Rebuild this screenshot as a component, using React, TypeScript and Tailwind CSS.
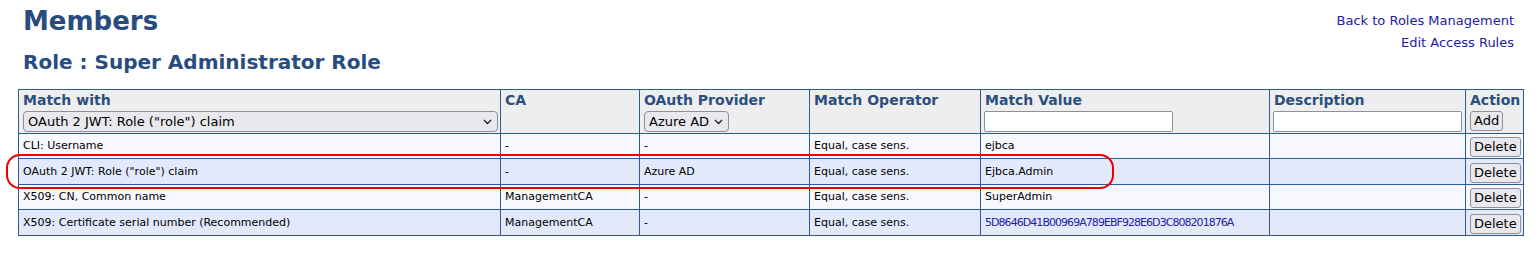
import React from "react";

const Chevron = () => (
  <svg width="9" height="6" viewBox="0 0 9 6" className="pointer-events-none absolute right-[6px] top-1/2 -translate-y-1/2">
    <polyline points="1,1 4.5,4.5 8,1" fill="none" stroke="#222" strokeWidth="1.4" />
  </svg>
);

function Sel({ value, className }: { value: string; className: string }) {
  return (
    <div className={"relative " + className}>
      <select
        defaultValue={value}
        className="h-[21px] w-full appearance-none rounded-[4px] border border-[#8f8f9d] bg-[#e9e9ed] pl-[4px] pr-[18px] text-[13px] font-normal leading-[19px] text-black"
      >
        <option>{value}</option>
      </select>
      <Chevron />
    </div>
  );
}

const Btn = ({ label }: { label: string }) => (
  <button className="h-[20px] rounded-[3px] border border-[#8f8f9d] bg-[#e9e9ed] px-[3px] text-[13px] font-normal leading-[18px] text-black">
    {label}
  </button>
);

const rows = [
  { m: "CLI: Username", ca: "-", p: "-", op: "Equal, case sens.", v: "ejbca", blue: false, link: false },
  { m: 'OAuth 2 JWT: Role ("role") claim', ca: "-", p: "Azure AD", op: "Equal, case sens.", v: "Ejbca.Admin", blue: true, link: false },
  { m: "X509: CN, Common name", ca: "ManagementCA", p: "-", op: "Equal, case sens.", v: "SuperAdmin", blue: false, link: false },
  { m: "X509: Certificate serial number (Recommended)", ca: "ManagementCA", p: "-", op: "Equal, case sens.", v: "5D8646D41B00969A789EBF928E6D3C808201876A", blue: true, link: true },
];

export default function App() {
  const th = "border border-[#2f5b94] px-[4px] pt-[1px] pb-[1px] text-left align-top text-[14px] font-bold leading-[18px] text-[#2b4e7e]";
  const td = "border border-[#2f5b94] px-[4px] py-0 text-[11px] leading-[14px] align-middle";
  return (
    <div className="relative h-[264px] w-[1539px] bg-white font-['DejaVu_Sans',Verdana,sans-serif]">
      <div className="flex justify-between pl-[23px] pr-[25px]">
        <div>
          <h1 className="mt-[5px] text-[26px] font-bold leading-[32px] text-[#284c7e]">Members</h1>
          <h2 className="mt-[13px] text-[20px] font-bold leading-[24px] text-[#284c7e]">Role : Super Administrator Role</h2>
        </div>
        <div className="flex flex-col items-end pt-[13px] text-[13px] leading-[16px] text-[#2020a8]">
          <a>Back to Roles Management</a>
          <a className="mt-[6px]">Edit Access Rules</a>
        </div>
      </div>
      <table className="ml-[18px] mt-[15px] w-[1505px] table-fixed border-collapse">
        <colgroup>
          <col className="w-[482px]" />
          <col className="w-[139px]" />
          <col className="w-[170px]" />
          <col className="w-[171px]" />
          <col className="w-[289px]" />
          <col className="w-[196px]" />
          <col className="w-[58px]" />
        </colgroup>
        <thead>
          <tr className="bg-[#eeeeee]">
            <th className={th}>
              <div>Match with</div>
              <Sel value={'OAuth 2 JWT: Role ("role") claim'} className="mt-[2px] w-[475px]" />
            </th>
            <th className={th}>CA</th>
            <th className={th}>
              <div>OAuth Provider</div>
              <Sel value="Azure AD" className="mt-[2px] w-[85px]" />
            </th>
            <th className={th}>Match Operator</th>
            <th className={th}>
              <div>Match Value</div>
              <input className="-ml-[1px] mt-[2px] block h-[21px] w-[189px] rounded-[2px] border border-[#8f8f9d] bg-white" />
            </th>
            <th className={th}>
              <div>Description</div>
              <input className="-ml-[1px] mt-[2px] block h-[21px] w-[189px] rounded-[2px] border border-[#8f8f9d] bg-white" />
            </th>
            <th className={th + " px-[3px]"}>
              <div>Action</div>
              <div className="mt-[2px]">
                <Btn label="Add" />
              </div>
            </th>
          </tr>
        </thead>
        <tbody>
          {rows.map((r, i) => (
            <tr key={i} className={r.blue ? "h-[26px] bg-[#e2e9fb]" : "h-[25px] bg-[#f7f8fd]"}>
              <td className={td + " text-black"}>{r.m}</td>
              <td className={td + " text-black"}>{r.ca}</td>
              <td className={td + " text-black"}>{r.p}</td>
              <td className={td + " text-black"}>{r.op}</td>
              <td className={td + (r.link ? " tracking-[-0.95px] text-[#2020a8]" : " text-black")}>{r.v}</td>
              <td className={td}></td>
              <td className={td + " px-[2px] pt-[2px]"}>
                <Btn label="Delete" />
              </td>
            </tr>
          ))}
        </tbody>
      </table>
      <div className="pointer-events-none absolute left-[6px] top-[154px] h-[35px] w-[1108px] rounded-[14px] border-2 border-[#ee0000]" />
    </div>
  );
}
